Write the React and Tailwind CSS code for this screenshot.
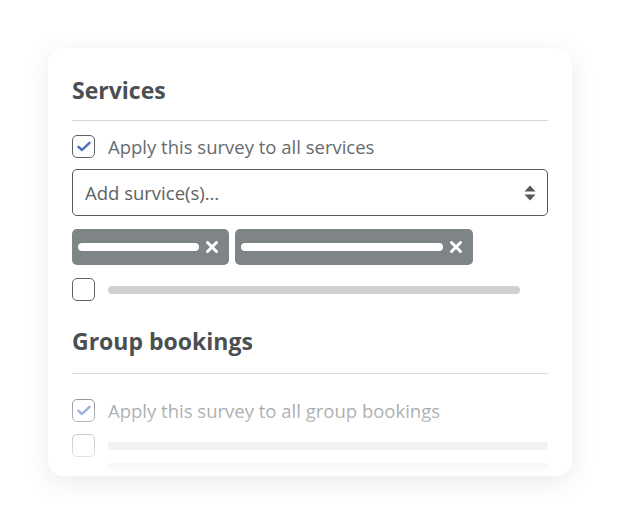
import React from 'react';

// Checkbox with the small blue tick
const Check = ({ checked = false }) => (
  <span className="flex h-[23px] w-[23px] shrink-0 items-center justify-center rounded-[5px] border-[1.5px] border-[#5e6366] bg-white">
    {checked && (
      <svg width="14" height="11" viewBox="0 0 14 11" fill="none">
        <path d="M1.5 5.8 L5 9 L12.5 1.8" stroke="#4a6fb8" strokeWidth="2.4" strokeLinecap="round" strokeLinejoin="round" />
      </svg>
    )}
  </span>
);

const Chip = ({ width, bar }) => (
  <div className={`flex h-9 items-center gap-[6px] rounded-[5px] bg-[#7f8486] pl-[6px] ${width}`}>
    <span className={`h-[8px] rounded-full bg-white ${bar}`} />
    <svg width="14" height="14" viewBox="0 0 14 14">
      <path d="M2.5 2.5 L11.5 11.5 M11.5 2.5 L2.5 11.5" stroke="#fff" strokeWidth="3" strokeLinecap="round" />
    </svg>
  </div>
);

export default function App() {
  return (
    <div
      className="h-[524px] w-[620px] bg-white px-12 pt-12"
      style={{ fontFamily: '"Open Sans", "Noto Sans", sans-serif' }}
    >
      <div className="relative h-[428px] w-[524px] overflow-hidden rounded-2xl bg-white px-6 pt-7 shadow-[0_6px_24px_rgba(40,60,80,0.10)]">
        <h2 className="text-[23px] font-bold leading-7 text-[#4a4f52]">Services</h2>
        <div className="mt-4 h-px bg-[#d6d8d9]" />

        <label className="mt-[14px] flex items-center gap-[13px]">
          <Check checked />
          <span className="text-[18.5px] leading-[23px] text-[#666b6e]">Apply this survey to all services</span>
        </label>

        <div className="mt-[11px] flex h-[47px] items-center justify-between rounded-[5px] border-[1.5px] border-[#55595c] pl-3 pr-[10px]">
          <span className="text-[18.5px] text-[#5d6265]">Add survice(s)…</span>
          <svg width="14" height="18" viewBox="0 0 14 18">
            <path d="M7 1.5 L12.5 7.5 H1.5 Z" fill="#55595c" />
            <path d="M7 16.5 L12.5 10.5 H1.5 Z" fill="#55595c" />
          </svg>
        </div>

        <div className="mt-[13px] flex gap-[6px]">
          <Chip width="w-[157px]" bar="w-[121px]" />
          <Chip width="w-[238px]" bar="w-[202px]" />
        </div>

        <div className="mt-[13px] flex items-center gap-[13px]">
          <Check />
          <span className="h-[8px] w-[412px] rounded-full bg-[#cfd0d1]" />
        </div>

        <h2 className="mt-[26px] text-[23px] font-bold leading-7 text-[#4a4f52]">Group bookings</h2>
        <div className="mt-[18px] h-px bg-[#d6d8d9]" />

        <label className="mt-[25px] flex items-center gap-[13px]">
          <Check checked />
          <span className="text-[18.5px] leading-[23px] text-[#666b6e]">Apply this survey to all group bookings</span>
        </label>

        <div className="mt-[12px] flex items-center gap-[13px]">
          <Check />
          <span className="h-[8px] flex-1 rounded-full bg-[#cfd0d1]" />
        </div>
        <div className="mt-[6px] pl-9">
          <span className="block h-[8px] rounded-full bg-[#cfd0d1]" />
        </div>

        {/* fade out the bottom of the card */}
        <div className="pointer-events-none absolute inset-x-0 bottom-0 h-[110px] bg-linear-to-b from-white/0 via-white/55 to-white/95" />
      </div>
    </div>
  );
}
